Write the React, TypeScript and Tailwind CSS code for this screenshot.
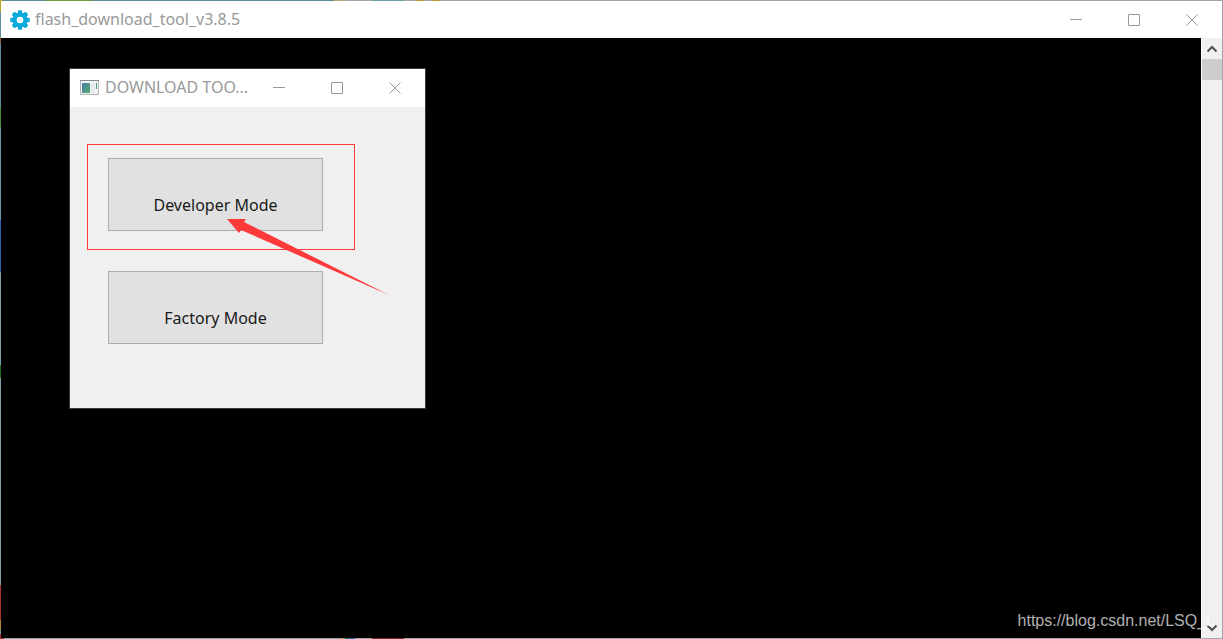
import React from "react";

function CaptionButtons() {
  const shapes = [
    { label: "Minimize", d: "M0 5.5H12" },
    { label: "Maximize", d: "M0.5 0.5H11.5V11.5H0.5Z" },
    { label: "Close", d: "M0.5 0.5L11.5 11.5M11.5 0.5L0.5 11.5" },
  ];
  return (
    <div className="flex shrink-0 self-stretch pr-px">
      {shapes.map((s) => (
        <button key={s.label} type="button" aria-label={s.label} className="flex w-[58px] items-center justify-center text-[#999999]">
          <svg width="12" height="12" viewBox="0 0 12 12" fill="none" stroke="currentColor">
            <path d={s.d} />
          </svg>
        </button>
      ))}
    </div>
  );
}

function GearIcon() {
  return (
    <svg width="20" height="20" viewBox="0 0 20 20" className="shrink-0">
      <g fill="#0ea8dc">
        {[0, 45, 90, 135].map((a) => (
          <rect key={a} x="7.8" y="0.2" width="4.4" height="19.6" rx="1.2" transform={`rotate(${a} 10 10)`} />
        ))}
        <circle cx="10" cy="10" r="7.6" />
      </g>
      <circle cx="10" cy="10" r="3.3" fill="#fff" />
    </svg>
  );
}

function AppIcon() {
  return (
    <svg width="20" height="16" viewBox="0 0 20 16" className="shrink-0">
      <defs>
        <linearGradient id="pane" x1="0" y1="0" x2="1" y2="1">
          <stop offset="0" stopColor="#4a7fae" />
          <stop offset="1" stopColor="#57a86c" />
        </linearGradient>
      </defs>
      <rect x="0.5" y="0.5" width="18" height="14" fill="#f4f4f4" stroke="#b0b4b8" />
      <path d="M0 0.5H19" stroke="#858c93" />
      <rect x="2" y="3" width="8" height="10" fill="url(#pane)" />
      <rect x="11" y="3" width="4" height="10" fill="#e4e9ee" />
      <rect x="16" y="3" width="1" height="6" fill="#4d9a8c" />
    </svg>
  );
}

function ModeButton({ children }: { children: React.ReactNode }) {
  return (
    <button type="button" className="flex h-[73px] w-[215px] items-end justify-center border border-[#adadad] bg-[#e1e1e1] pb-[13px] text-base text-[#1a1a1a]">
      {children}
    </button>
  );
}

function ModeDialog() {
  return (
    <section className="absolute top-[31px] left-[69px] w-[355px] bg-[#f0f0f0] outline outline-[#3a3a3a]">
      <header className="flex h-[38px] items-center bg-white pl-[10px]">
        <AppIcon />
        <h2 className="ml-[5px] flex-1 pb-[2px] text-base whitespace-nowrap text-[#999999]">DOWNLOAD TOO...</h2>
        <CaptionButtons />
      </header>
      <div className="flex flex-col items-start gap-10 px-[38px] pt-[51px] pb-16">
        <ModeButton>Developer Mode</ModeButton>
        <ModeButton>Factory Mode</ModeButton>
      </div>
      <div className="pointer-events-none absolute top-[75px] left-[17px] h-[106px] w-[268px] border border-[#fe3a3a]" />
      <svg width="163" height="77" viewBox="0 0 163 77" className="pointer-events-none absolute top-[150px] left-[157px]">
        <path d="M0 0H19L17 3L162 76L14 11L12 14Z" fill="#fe3a3a" />
      </svg>
    </section>
  );
}

function ScrollBar() {
  return (
    <div className="flex w-[21px] shrink-0 flex-col border-l border-white bg-[#f0f0f0] text-[#505050]">
      <button type="button" aria-label="Scroll up" className="flex h-[21px] items-center justify-center">
        <svg width="10" height="8" viewBox="0 0 10 8" fill="none" stroke="currentColor" strokeWidth="2">
          <path d="M0.5 6.5L5 2L9.5 6.5" />
        </svg>
      </button>
      <div className="h-[21px] bg-[#cdcdcd]" />
      <div className="flex-1" />
      <button type="button" aria-label="Scroll down" className="flex h-[21px] items-center justify-center">
        <svg width="10" height="8" viewBox="0 0 10 8" fill="none" stroke="currentColor" strokeWidth="2">
          <path d="M0.5 1.5L5 6L9.5 1.5" />
        </svg>
      </button>
    </div>
  );
}

/* Slivers of the desktop that show through along the window's frame. */
function DesktopEdges() {
  return (
    <div aria-hidden="true" className="pointer-events-none">
      <div className="absolute inset-x-0 top-0 h-px bg-[linear-gradient(90deg,#b39a2e_0_3px,#5d8c99_3px_45px,#6a9a3a_45px_92px,#5d8c99_92px_334px,#b5a878_334px_346px,#a5a5a5_346px_372px,#6d9ba5_372px_404px,#a5a5a5_404px_416px,#b8973a_416px_424px,#a5a5a5_424px_432px,#b8973a_432px_440px,#a5a5a5_440px)]" />
      <div className="absolute inset-y-0 left-0 w-px bg-[linear-gradient(180deg,#c0a52a_0_12px,#5f8d9b_12px_38px,#9a5a3a_38px_43px,#5f8d9b_43px_107px,#4f8a3c_107px_127px,#6d97a3_127px_220px,#2c5fb0_220px_272px,#7f9fa5_272px_365px,#1c6a1c_365px_378px,#7f9fa5_378px_585px,#a8322a_585px_620px,#a8873a_620px_630px,#7f9fa5_630px_634px,#a8322a_634px)]" />
      <div className="absolute inset-x-0 bottom-0 h-px bg-[linear-gradient(90deg,#a8322a_0_4px,#85a5aa_4px_339px,#a89a5a_339px_345px,#2c5f9e_345px_355px,#a5a5a5_355px_372px,#8a2222_372px_404px,#a5a5a5_404px)]" />
    </div>
  );
}

export default function App() {
  return (
    <main className="relative flex h-screen flex-col overflow-hidden bg-[#a5a5a5] p-px font-['Noto_Sans','Open_Sans',sans-serif]">
      <DesktopEdges />
      <header className="flex h-[37px] shrink-0 items-center bg-white pl-[9px]">
        <GearIcon />
        <h1 className="ml-[5px] flex-1 pb-px text-base whitespace-nowrap text-[#999999]">flash_download_tool_v3.8.5</h1>
        <CaptionButtons />
      </header>
      <div className="flex min-h-0 flex-1">
        <div className="relative flex-1 bg-black">
          <ModeDialog />
        </div>
        <ScrollBar />
      </div>
      <p className="pointer-events-none absolute right-2 bottom-[6px] font-['Liberation_Sans',sans-serif] text-base text-white/70">https://blog.csdn.net/LSQ_L</p>
    </main>
  );
}
